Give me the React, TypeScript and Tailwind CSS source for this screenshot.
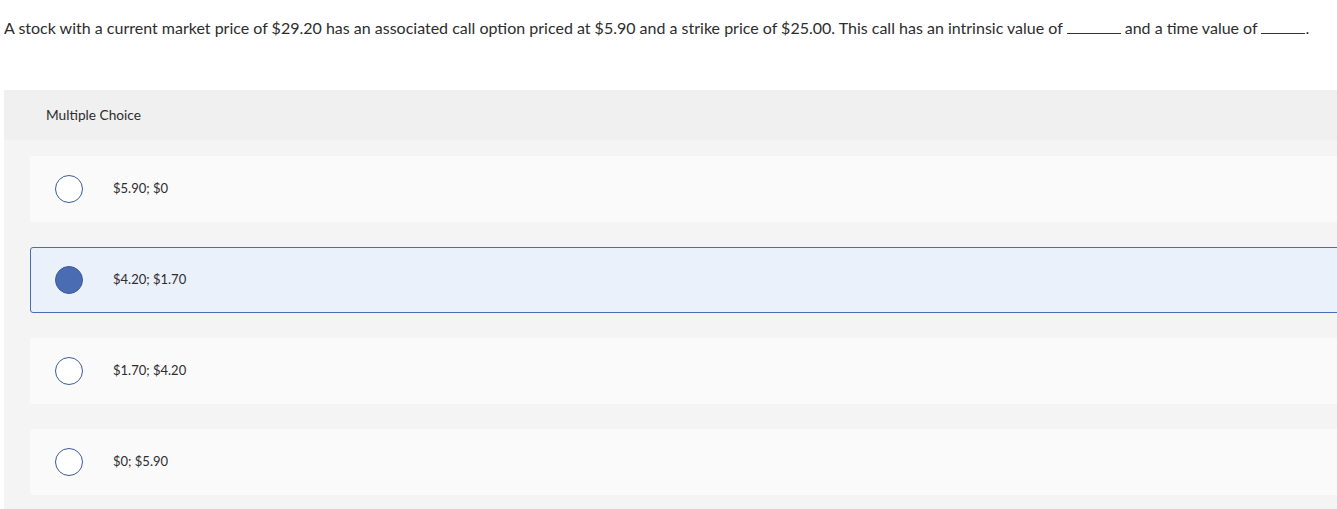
const options = [
  { id: 'a', label: '$5.90; $0', selected: false },
  { id: 'b', label: '$4.20; $1.70', selected: true },
  { id: 'c', label: '$1.70; $4.20', selected: false },
  { id: 'd', label: '$0; $5.90', selected: false },
];

export default function App() {
  return (
    <div className="min-h-[509px] overflow-hidden bg-white font-['Lato','Liberation_Sans',sans-serif] text-[#2d2d2d]">
      {/* Question */}
      <p className="pl-1 pt-[18px] text-[16px] leading-5 whitespace-nowrap">
        A stock with a current market price of $29.20 has an associated call option priced at $5.90 and a strike price of $25.00. This call has an intrinsic value of{' '}
        <span className="inline-block w-[54px] border-b border-[#333] align-baseline"></span> and a time value of{' '}
        <span className="inline-block w-[44px] border-b border-[#333] align-baseline"></span>.
      </p>

      {/* Multiple choice block */}
      <div className="ml-1 mt-[52px] w-[calc(100%+40px)]">
        <div className="flex h-[50px] items-center bg-[#f0f0f0] pl-[42px] text-[13.7px]">
          Multiple Choice
        </div>
        <div className="flex flex-col gap-[25px] bg-[#f4f4f4] pb-[14px] pl-[26px] pr-[26px] pt-4">
          {options.map((opt) => (
            <div
              key={opt.id}
              className={
                opt.selected
                  ? 'flex h-[66px] items-center rounded-[3px] border border-[#4a6db5] bg-[#eaf1fb] pl-6'
                  : 'flex h-[66px] items-center rounded-[3px] border border-transparent bg-[#fafafa] pl-6'
              }
            >
              <span
                className={
                  opt.selected
                    ? 'h-[28px] w-[28px] shrink-0 rounded-full border-[1.5px] border-[#3d5a99] bg-[#4a6cb3]'
                    : 'h-[28px] w-[28px] shrink-0 rounded-full border-[1.5px] border-[#3d5a99] bg-white'
                }
              />
              <span className="ml-[30px] text-[13px]">{opt.label}</span>
            </div>
          ))}
        </div>
      </div>
    </div>
  );
}
